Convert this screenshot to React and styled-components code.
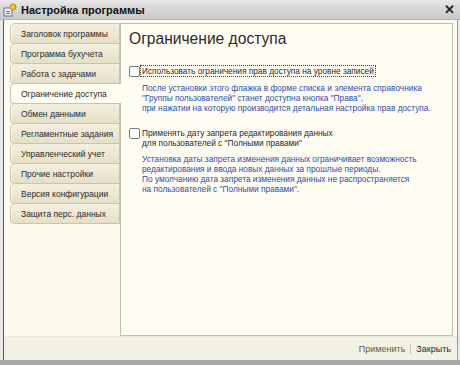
import React from "react";
import styled, { createGlobalStyle } from "styled-components";

const Global = createGlobalStyle`
  html, body { margin: 0; padding: 0; background: #d8d8d8; }
  body { font-family: "Liberation Sans", Arial, sans-serif; }
`;

const Screen = styled.div`
  width: 460px;
  height: 365px;
  overflow: hidden;
  display: flex;
  flex-direction: column;
  background: #e9e9e9;
`;

const TitleBar = styled.div`
  height: 19px;
  flex: none;
  display: flex;
  align-items: center;
  gap: 4px;
  padding: 0 5px 0 3px;
  background: linear-gradient(#e8e8e8 0%, #d6d6d6 45%, #cacaca 100%);
  border-bottom: 1px solid #b4b4b4;
`;

const Title = styled.span`
  flex: 1;
  font-size: 11px;
  font-weight: bold;
  color: #111;
`;

const Close = styled.span`
  font-size: 13px;
  font-weight: bold;
  color: #222;
  line-height: 1;
`;

const Window = styled.div`
  flex: 1;
  display: flex;
  flex-direction: column;
  margin-left: 3px;
  margin-right: 2px;
  border-left: 1px solid #5a5a5a;
  border-right: 1px solid #9a9a9a;
  background: #fdfbee;
`;

const Main = styled.div`
  flex: 1;
  display: flex;
  padding: 3px 0 0 6px;
`;

const Tabs = styled.div`
  width: 110px;
  flex: none;
  display: flex;
  flex-direction: column;
  position: relative;
  z-index: 1;
`;

const Tab = styled.div`
  height: 21px;
  box-sizing: border-box;
  display: flex;
  align-items: center;
  padding-left: 10px;
  font-size: 8.5px;
  white-space: nowrap;
  color: #2a2a2a;
  border: 1px solid #cbc4ab;
  border-right: ${(p) => (p.$active ? "none" : "1px solid #cbc4ab")};
  border-radius: 5px 0 0 4px;
  margin-top: -1px;
  margin-right: ${(p) => (p.$active ? "-1px" : "0")};
  background: ${(p) =>
    p.$active
      ? "#fffdf2"
      : "linear-gradient(#f4f0df 0%, #ece6d1 60%, #e5dfc7 100%)"};
  box-shadow: inset 1px 0 0 #fbf9ef;
  &:first-child { margin-top: 0; }
`;

const Panel = styled.div`
  flex: 1;
  margin-right: 4px;
  border: 1px solid #c2bfae;
  background: #fffdf2;
  padding: 5px 8px 0 8px;
  display: flex;
  flex-direction: column;
  white-space: nowrap;
`;

const Heading = styled.h1`
  margin: 0 0 17px 0;
  font-size: 15.6px;
  font-weight: normal;
  color: #2c2c2c;
  line-height: 20px;
`;

const CheckRow = styled.label`
  display: flex;
  align-items: flex-start;
  gap: 1px;
  font-size: 8.3px;
  color: #2a2a2a;
  line-height: 10px;
`;

const Box = styled.span`
  width: 9px;
  height: 9px;
  flex: none;
  border: 1px solid #7a7a7a;
  border-radius: 2px;
  background: #fff;
`;

const LabelText = styled.span`
  outline: ${(p) => (p.$focus ? "1px dotted #444" : "none")};
  padding: 0 1px;
`;

const Note = styled.div`
  font-size: 8.3px;
  line-height: 10px;
  color: #2b4db0;
  padding-left: 13px;
  margin-top: 6px;
`;

const Spacer = styled.div`
  height: ${(p) => p.$h}px;
`;

const BottomBar = styled.div`
  height: 23px;
  flex: none;
  display: flex;
  justify-content: flex-end;
  align-items: center;
  padding-right: 1px;
  border-top: 1px solid #ebe8da;
  background: #f3f1e3;
`;

const Btn = styled.span`
  font-size: 9px;
  color: ${(p) => (p.$primary ? "#6b5a1e" : "#2a2a2a")};
  padding: 0 5px;
  & + & { border-left: 1px solid #c8c2a8; }
`;

const StatusStrip = styled.div`
  height: 5px;
  flex: none;
  background: #a9a9a9;
`;

const IconWrap = styled.span`
  width: 14px;
  height: 14px;
  display: inline-flex;
`;

const tabs = [
  "Заголовок программы",
  "Программа бухучета",
  "Работа с задачами",
  "Ограничение доступа",
  "Обмен данными",
  "Регламентные задания",
  "Управленческий учет",
  "Прочие настройки",
  "Версия конфигурации",
  "Защита перс. данных",
];

function AppIcon() {
  return (
    <IconWrap>
      <svg width="14" height="14" viewBox="0 0 14 14">
        <rect x="1" y="5" width="8" height="8" fill="#f6f6f6" stroke="#5b6f9a" />
        <rect x="3" y="8" width="4" height="1" fill="#5b6f9a" />
        <rect x="3" y="10" width="4" height="1" fill="#5b6f9a" />
        <circle cx="10" cy="4" r="3" fill="#f4c430" stroke="#c08a10" />
      </svg>
    </IconWrap>
  );
}

export default function App() {
  return (
    <>
      <Global />
      <Screen>
        <TitleBar>
          <AppIcon />
          <Title>Настройка программы</Title>
          <Close>✕</Close>
        </TitleBar>
        <Window>
          <Main>
            <Tabs>
              {tabs.map((t) => (
                <Tab key={t} $active={t === "Ограничение доступа"}>
                  {t}
                </Tab>
              ))}
            </Tabs>
            <Panel>
              <Heading>Ограничение доступа</Heading>
              <CheckRow>
                <Box />
                <LabelText $focus>
                  Использовать ограничения прав доступа на уровне записей
                </LabelText>
              </CheckRow>
              <Note>
                После установки этого флажка в форме списка и элемента справочника
                <br />
                "Группы пользователей" станет доступна кнопка "Права",
                <br />
                при нажатии на которую производится детальная настройка прав доступа.
              </Note>
              <Spacer $h={15} />
              <CheckRow>
                <Box />
                <LabelText>
                  Применять дату запрета редактирования данных
                  <br />
                  для пользователей с "Полными правами"
                </LabelText>
              </CheckRow>
              <Note>
                Установка даты запрета изменения данных ограничивает возможность
                <br />
                редактирования и ввода новых данных за прошлые периоды.
                <br />
                По умолчанию дата запрета изменения данных не распространяется
                <br />
                на пользователей с "Полными правами".
              </Note>
            </Panel>
          </Main>
          <BottomBar>
            <Btn $primary>Применить</Btn>
            <Btn>Закрыть</Btn>
          </BottomBar>
        </Window>
        <StatusStrip />
      </Screen>
    </>
  );
}
